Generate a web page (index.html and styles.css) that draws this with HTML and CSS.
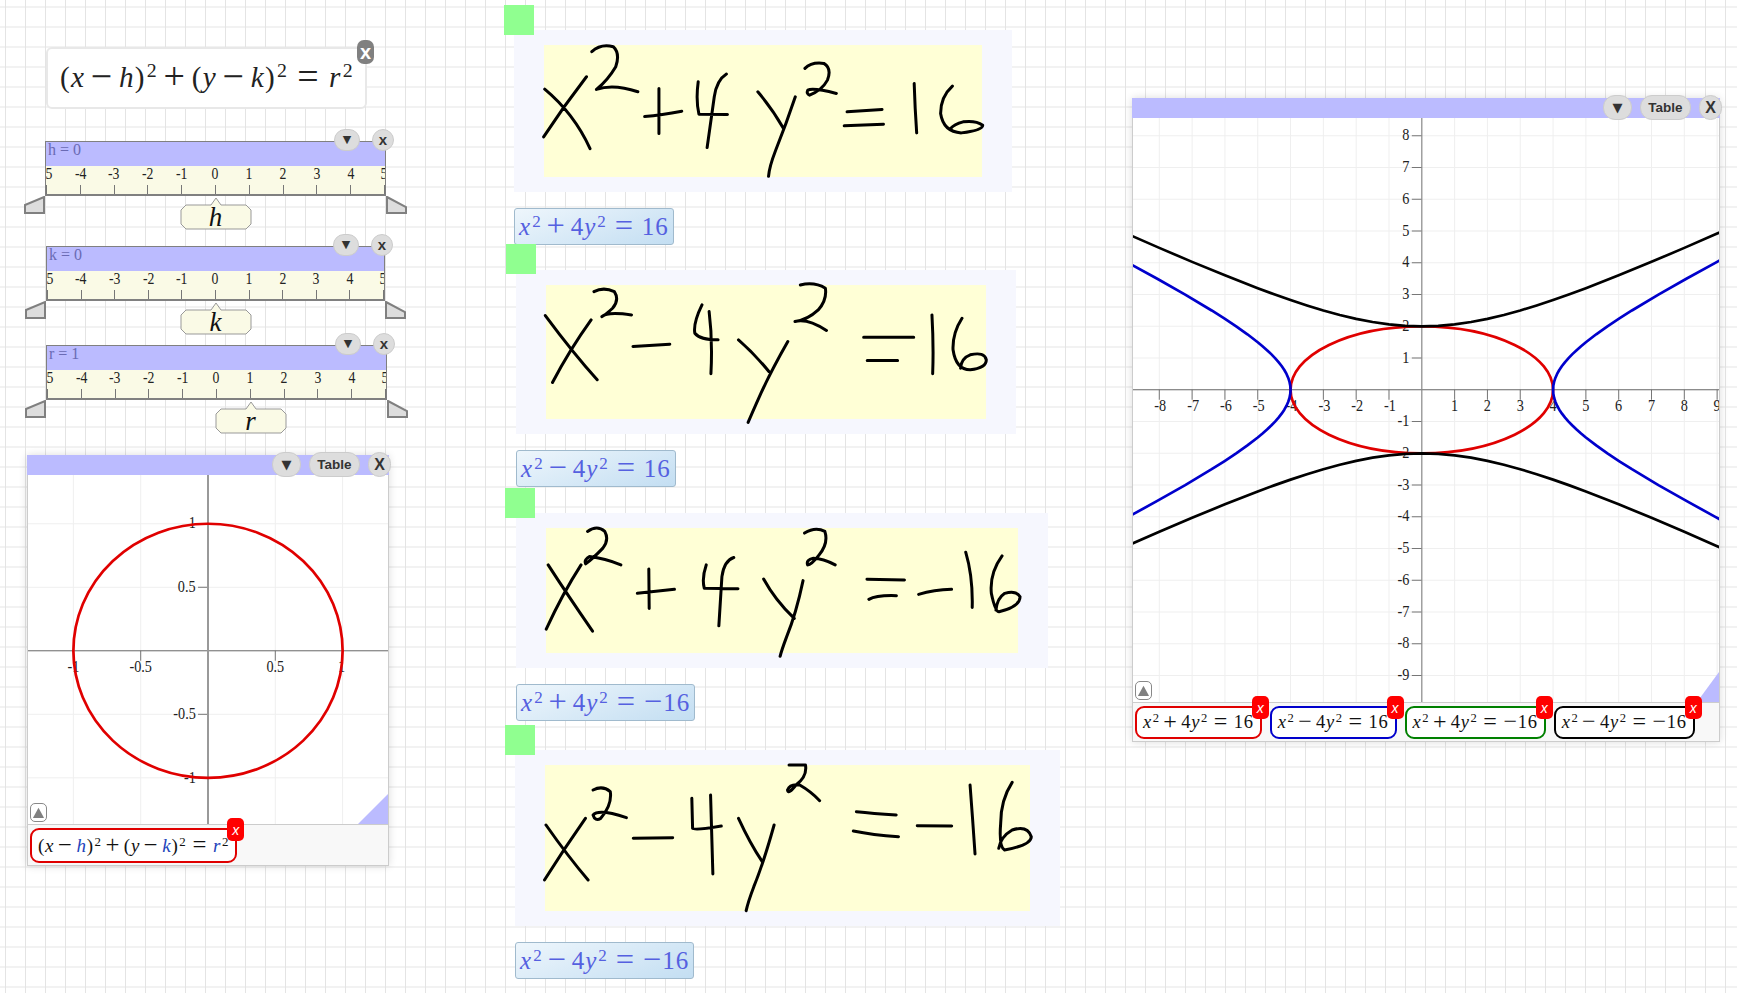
FILE: index.html
```html
<!DOCTYPE html>
<html lang="en">
<head>
<meta charset="utf-8">
<title>Conics workspace</title>
<link rel="stylesheet" href="styles.css">
</head>
<body>
<main class="canvas">

  <div class="formula-card">
    <span class="math"><span>(</span><i>x</i><span class="op">−</span><i>h</i><span>)</span><sup>2</sup><span class="op">+</span><span>(</span><i>y</i><span class="op">−</span><i>k</i><span>)</span><sup>2</sup><span class="rel">=</span><i>r</i><sup>2</sup></span>
    <button class="card-close">x</button>
  </div>

  <section class="slider slider-h">
    <div class="slider-head">h = 0</div>
    <div class="scale">
      <div class="tick"><span>-5</span></div><div class="tick"><span>-4</span></div><div class="tick"><span>-3</span></div><div class="tick"><span>-2</span></div><div class="tick"><span>-1</span></div><div class="tick"><span>0</span></div><div class="tick"><span>1</span></div><div class="tick"><span>2</span></div><div class="tick"><span>3</span></div><div class="tick"><span>4</span></div><div class="tick"><span>5</span></div>
    </div>
    <svg class="handle handle-l" viewBox="0 0 22 18"><polygon points="20,1 20,17 1,17 1,9"/></svg>
    <svg class="handle handle-r" viewBox="0 0 22 18"><polygon points="2,1 21,11 21,17 2,17"/></svg>
    <div class="thumb" style="left:50%"><svg viewBox="0 0 72 33"><polygon points="36,1 41,8 66,8 71,13 71,27 66,32 6,32 1,27 1,13 6,8 31,8"/></svg><i>h</i></div>
    <div class="tools slider-tools"><button class="pill pill-drop">▼</button><button class="pill pill-x">x</button></div>
  </section>

  <section class="slider slider-k">
    <div class="slider-head">k = 0</div>
    <div class="scale">
      <div class="tick"><span>-5</span></div><div class="tick"><span>-4</span></div><div class="tick"><span>-3</span></div><div class="tick"><span>-2</span></div><div class="tick"><span>-1</span></div><div class="tick"><span>0</span></div><div class="tick"><span>1</span></div><div class="tick"><span>2</span></div><div class="tick"><span>3</span></div><div class="tick"><span>4</span></div><div class="tick"><span>5</span></div>
    </div>
    <svg class="handle handle-l" viewBox="0 0 22 18"><polygon points="20,1 20,17 1,17 1,9"/></svg>
    <svg class="handle handle-r" viewBox="0 0 22 18"><polygon points="2,1 21,11 21,17 2,17"/></svg>
    <div class="thumb" style="left:50%"><svg viewBox="0 0 72 33"><polygon points="36,1 41,8 66,8 71,13 71,27 66,32 6,32 1,27 1,13 6,8 31,8"/></svg><i>k</i></div>
    <div class="tools slider-tools"><button class="pill pill-drop">▼</button><button class="pill pill-x">x</button></div>
  </section>

  <section class="slider slider-r">
    <div class="slider-head">r = 1</div>
    <div class="scale">
      <div class="tick"><span>-5</span></div><div class="tick"><span>-4</span></div><div class="tick"><span>-3</span></div><div class="tick"><span>-2</span></div><div class="tick"><span>-1</span></div><div class="tick"><span>0</span></div><div class="tick"><span>1</span></div><div class="tick"><span>2</span></div><div class="tick"><span>3</span></div><div class="tick"><span>4</span></div><div class="tick"><span>5</span></div>
    </div>
    <svg class="handle handle-l" viewBox="0 0 22 18"><polygon points="20,1 20,17 1,17 1,9"/></svg>
    <svg class="handle handle-r" viewBox="0 0 22 18"><polygon points="2,1 21,11 21,17 2,17"/></svg>
    <div class="thumb" style="left:60%"><svg viewBox="0 0 72 33"><polygon points="36,1 41,8 66,8 71,13 71,27 66,32 6,32 1,27 1,13 6,8 31,8"/></svg><i>r</i></div>
    <div class="tools slider-tools"><button class="pill pill-drop">▼</button><button class="pill pill-x">x</button></div>
  </section>

  <section class="win win-small">
    <div class="win-head"></div>
    <div class="plot">
      <svg class="plot-svg" viewBox="0 0 360 350">
        <g transform="translate(180 176.3) scale(135 -127.4)">
          <path class="grid" d="M-1 -2V2M-.5 -2V2M.5 -2V2M1 -2V2M-2 1H2M-2 .5H2M-2 -.5H2M-2 -1H2"/>
          <path class="tickmark" d="M-1 0V-.078M-.5 0V-.078M.5 0V-.078M1 0V-.078M-.074 1H0M-.074 .5H0M-.074 -.5H0M-.074 -1H0"/>
          <path class="axis-x" d="M-2 0H2"/>
          <path class="axis-y" d="M0 -2V2"/>
        </g>
        <g>
          <text class="lbl" x="45" y="198">-1</text><text class="lbl" x="112.5" y="198">-0.5</text><text class="lbl" x="247.5" y="198">0.5</text><text class="lbl" x="314" y="198">1</text>
          <text class="lbl" x="164.3" y="53">1</text><text class="lbl" x="158.7" y="117.5">0.5</text><text class="lbl" x="156.5" y="244.5">-0.5</text><text class="lbl" x="162" y="309">-1</text>
        </g>
        <g transform="translate(180 176.3) scale(135 -127.4)">
          <circle class="curve c-red" r="1"/>
        </g>
      </svg>
      <button class="up-btn"><svg viewBox="0 0 14 14"><polygon points="7,2 13,13 1,13"/></svg></button>
      <div class="corner"></div>
    </div>
    <div class="legend">
      <div class="chip chip-red"><span class="math"><span>(</span><i>x</i><span class="op">−</span><i class="var">h</i><span>)</span><sup>2</sup><span class="op">+</span><span>(</span><i>y</i><span class="op">−</span><i class="var">k</i><span>)</span><sup>2</sup><span class="rel">=</span><i class="var">r</i><sup>2</sup></span><button class="chip-x">x</button></div>
    </div>
    <div class="tools win-tools"><button class="pill pill-drop">▼</button><button class="pill pill-table">Table</button><button class="pill pill-x">X</button></div>
  </section>

  <article class="note note-1">
    <div class="handle-square"></div>
    <div class="sheet">
      <div class="ink-fill"></div>
      <svg class="ink" viewBox="67 90 1395 485" preserveAspectRatio="none"><path d="M153 267Q235 340 280 445M270 230Q205 320 150 410M285 155Q310 130 345 140Q365 160 352 200Q330 240 298 268Q345 250 414 275M433 349Q480 345 537 333M473 265V400M583 245Q576 300 585 342L665 343M662 222Q635 240 628 290L608 442M750 275Q790 325 822 385M855 290Q830 370 800 450Q782 500 780 528M882 205Q900 185 935 190Q958 205 945 240Q930 270 895 285Q885 280 890 270Q905 262 970 280M1000 335L1098 328M992 377L1102 372M1188 250Q1190 320 1195 398M1295 258Q1262 290 1262 340Q1270 395 1320 398Q1380 390 1380 375Q1360 360 1325 365Q1300 372 1290 385"/></svg>
    </div>
    <div class="eq-tag"><span class="math"><i>x</i><sup>2</sup><span class="op">+</span>4<i>y</i><sup>2</sup><span class="rel">=</span>16</span></div>
  </article>

  <article class="note note-2">
    <div class="handle-square"></div>
    <div class="sheet">
      <div class="ink-fill"></div>
      <svg class="ink" viewBox="75 810 1398 493" preserveAspectRatio="none"><path d="M157 947Q235 1060 302 1140M285 960Q225 1050 177 1148M293 875Q320 860 350 875Q365 900 345 925Q325 945 315 950Q330 935 398 945M402 1040L505 1033M595 915Q570 970 575 1000Q590 1020 640 1020M615 935Q625 1020 620 1122M697 1020Q740 1060 782 1115M835 1025Q790 1110 760 1180Q735 1240 724 1268M870 855Q910 845 940 865Q945 900 920 930Q890 960 855 965Q890 955 943 992M1047 1012L1187 1012M1057 1082L1142 1082M1238 945Q1243 1040 1240 1122M1322 955Q1295 1000 1297 1050Q1305 1110 1345 1110Q1390 1105 1390 1080Q1385 1055 1345 1065Q1320 1075 1318 1105"/></svg>
    </div>
    <div class="eq-tag"><span class="math"><i>x</i><sup>2</sup><span class="op">−</span>4<i>y</i><sup>2</sup><span class="rel">=</span>16</span></div>
  </article>

  <article class="note note-3">
    <div class="handle-square"></div>
    <div class="sheet">
      <div class="ink-fill"></div>
      <svg class="ink" viewBox="68 70 1390 463" preserveAspectRatio="none"><path d="M152 225Q200 310 268 423M238 225Q190 310 147 417M255 125Q280 105 300 125Q312 150 295 175Q270 205 250 222Q245 210 260 200Q300 205 342 225M385 310L482 298M415 237L416 355M565 225Q553 265 560 295L648 296M637 203Q612 212 606 260L598 407M715 267Q745 330 795 385M818 272Q800 370 775 440Q762 480 758 498M822 130Q850 110 875 125Q885 160 860 195Q840 225 830 225Q825 210 845 205Q870 205 902 225M985 268L1083 270M990 328Q1010 315 1062 317M1120 313Q1160 300 1206 298M1243 187Q1262 260 1260 352M1338 198Q1305 250 1310 310Q1320 365 1330 365Q1385 350 1385 320Q1375 300 1345 310Q1325 325 1322 360"/></svg>
    </div>
    <div class="eq-tag"><span class="math"><i>x</i><sup>2</sup><span class="op">+</span>4<i>y</i><sup>2</sup><span class="rel">=</span><span class="neg">−</span>16</span></div>
  </article>

  <article class="note note-4">
    <div class="handle-square"></div>
    <div class="sheet">
      <div class="ink-fill"></div>
      <svg class="ink" viewBox="66 780 1424 528" preserveAspectRatio="none"><path d="M147 1005Q205 1100 257 1170M250 985Q195 1075 143 1170M270 900Q295 885 315 905Q320 945 290 985Q275 995 270 975Q285 955 357 983M375 1045L478 1043M528 925L530 1015Q535 1022 605 1008M577 915L583 1152M650 985Q680 1060 712 1115M743 1005Q715 1120 690 1190Q675 1235 670 1262M782 825L825 825Q830 860 800 885Q780 915 778 900Q785 880 810 885Q840 905 862 932M958 965Q1000 970 1062 975M950 1023Q1000 1035 1068 1040M1117 1007L1207 1008M1255 885Q1262 990 1268 1092M1365 877Q1335 930 1335 1000Q1330 1070 1345 1080Q1415 1065 1415 1040Q1405 1005 1365 1020Q1335 1040 1330 1075"/></svg>
    </div>
    <div class="eq-tag"><span class="math"><i>x</i><sup>2</sup><span class="op">−</span>4<i>y</i><sup>2</sup><span class="rel">=</span><span class="neg">−</span>16</span></div>
  </article>

  <section class="win win-big">
    <div class="win-head"></div>
    <div class="plot">
      <svg class="plot-svg" viewBox="0 0 586 585">
        <g transform="translate(288.8 272.3) scale(32.87 -31.8)">
          <path class="grid" d="M-8 -10V10M-7 -10V10M-6 -10V10M-5 -10V10M-4 -10V10M-3 -10V10M-2 -10V10M-1 -10V10M1 -10V10M2 -10V10M3 -10V10M4 -10V10M5 -10V10M6 -10V10M7 -10V10M8 -10V10M9 -10V10M-9 8H10M-9 7H10M-9 6H10M-9 5H10M-9 4H10M-9 3H10M-9 2H10M-9 1H10M-9 -1H10M-9 -2H10M-9 -3H10M-9 -4H10M-9 -5H10M-9 -6H10M-9 -7H10M-9 -8H10M-9 -9H10"/>
          <path class="tickmark" d="M-8 0V-.314M-7 0V-.314M-6 0V-.314M-5 0V-.314M-4 0V-.314M-3 0V-.314M-2 0V-.314M-1 0V-.314M1 0V-.314M2 0V-.314M3 0V-.314M4 0V-.314M5 0V-.314M6 0V-.314M7 0V-.314M8 0V-.314M9 0V-.314M-.304 8H0M-.304 7H0M-.304 6H0M-.304 5H0M-.304 4H0M-.304 3H0M-.304 2H0M-.304 1H0M-.304 -1H0M-.304 -2H0M-.304 -3H0M-.304 -4H0M-.304 -5H0M-.304 -6H0M-.304 -7H0M-.304 -8H0M-.304 -9H0"/>
          <path class="axis-x" d="M-9 0H10"/>
          <path class="axis-y thin" d="M0 -10V10"/>
        </g>
        <g>
          <text class="lbl" x="26.8" y="293.5">-8</text><text class="lbl" x="59.7" y="293.5">-7</text><text class="lbl" x="92.6" y="293.5">-6</text><text class="lbl" x="125.5" y="293.5">-5</text><text class="lbl" x="158.3" y="293.5">-4</text><text class="lbl" x="191.2" y="293.5">-3</text><text class="lbl" x="224.1" y="293.5">-2</text><text class="lbl" x="256.9" y="293.5">-1</text><text class="lbl" x="321.7" y="293.5">1</text><text class="lbl" x="354.5" y="293.5">2</text><text class="lbl" x="387.4" y="293.5">3</text><text class="lbl" x="420.3" y="293.5">4</text><text class="lbl" x="453.2" y="293.5">5</text><text class="lbl" x="486" y="293.5">6</text><text class="lbl" x="518.9" y="293.5">7</text><text class="lbl" x="551.8" y="293.5">8</text><text class="lbl" x="584.6" y="293.5">9</text>
          <text class="lbl" x="272.8" y="22.4">8</text><text class="lbl" x="272.8" y="54.2">7</text><text class="lbl" x="272.8" y="86">6</text><text class="lbl" x="272.8" y="117.8">5</text><text class="lbl" x="272.8" y="149.6">4</text><text class="lbl" x="272.8" y="181.4">3</text><text class="lbl" x="272.8" y="213.2">2</text><text class="lbl" x="272.8" y="245">1</text><text class="lbl" x="270.3" y="308.6">-1</text><text class="lbl" x="270.3" y="340.4">-2</text><text class="lbl" x="270.3" y="372.2">-3</text><text class="lbl" x="270.3" y="404">-4</text><text class="lbl" x="270.3" y="435.8">-5</text><text class="lbl" x="270.3" y="467.6">-6</text><text class="lbl" x="270.3" y="499.4">-7</text><text class="lbl" x="270.3" y="531.2">-8</text><text class="lbl" x="270.3" y="563">-9</text>
        </g>
        <g transform="translate(288.8 272.3) scale(32.87 -31.8)">
          <ellipse class="curve c-red" rx="4" ry="2"/>
          <path id="blue-branch" class="curve c-blue" d="M9.12 4.1L8.944 4L8.062 3.5L7.211 3L6.403 2.5L6.021 2.25L5.657 2L5.315 1.75L5 1.5L4.854 1.375L4.717 1.25L4.589 1.125L4.472 1L4.366 .875L4.272 .75L4.19 .625L4.123 .5L4.07 .375L4.031 .25L4.008 .125L4 0L4.008 -.125L4.031 -.25L4.07 -.375L4.123 -.5L4.19 -.625L4.272 -.75L4.366 -.875L4.472 -1L4.589 -1.125L4.717 -1.25L4.854 -1.375L5 -1.5L5.315 -1.75L5.657 -2L6.021 -2.25L6.403 -2.5L7.211 -3L8.062 -3.5L8.944 -4L9.12 -4.1"/>
          <use href="#blue-branch" transform="scale(-1 1)"/>
          <path id="black-branch" class="curve c-black" d="M-9.2 5.01L-9 4.924L-8 4.472L-7 4.031L-6 3.606L-5 3.2L-4.5 3.01L-4 2.828L-3.5 2.658L-3 2.5L-2.5 2.358L-2 2.236L-1.5 2.136L-1 2.062L-.5 2.016L0 2L.5 2.016L1 2.062L1.5 2.136L2 2.236L2.5 2.358L3 2.5L3.5 2.658L4 2.828L4.5 3.01L5 3.2L6 3.606L7 4.031L8 4.472L9 4.924L9.2 5.01"/>
          <use href="#black-branch" transform="scale(1 -1)"/>
        </g>
      </svg>
      <button class="up-btn"><svg viewBox="0 0 14 14"><polygon points="7,2 13,13 1,13"/></svg></button>
      <div class="corner"></div>
    </div>
    <div class="legend">
      <div class="chip chip-red"><span class="math"><i>x</i><sup>2</sup><span class="op">+</span>4<i>y</i><sup>2</sup><span class="rel">=</span>16</span><button class="chip-x">x</button></div>
      <div class="chip chip-blue"><span class="math"><i>x</i><sup>2</sup><span class="op">−</span>4<i>y</i><sup>2</sup><span class="rel">=</span>16</span><button class="chip-x">x</button></div>
      <div class="chip chip-green"><span class="math"><i>x</i><sup>2</sup><span class="op">+</span>4<i>y</i><sup>2</sup><span class="rel">=</span><span class="neg">−</span>16</span><button class="chip-x">x</button></div>
      <div class="chip chip-black"><span class="math"><i>x</i><sup>2</sup><span class="op">−</span>4<i>y</i><sup>2</sup><span class="rel">=</span><span class="neg">−</span>16</span><button class="chip-x">x</button></div>
    </div>
    <div class="tools win-tools"><button class="pill pill-drop">▼</button><button class="pill pill-table">Table</button><button class="pill pill-x">X</button></div>
  </section>

</main>
</body>
</html>
```

FILE: styles.css
```css
* { box-sizing: border-box; }
html, body { margin: 0; height: 100%; }
body {
  overflow: hidden;
  background-color: #fff;
  background-image: linear-gradient(#e4e4e4 1px, transparent 1px), linear-gradient(90deg, #e4e4e4 1px, transparent 1px);
  background-size: 20px 20px;
  background-position: 5px 6.5px;
  font-family: "Liberation Serif", serif;
}
.canvas { position: relative; width: 1737px; height: 993px; }
button { font-family: inherit; padding: 0; margin: 0; }

/* math typesetting */
.math { font-family: "Liberation Serif", serif; letter-spacing: .04em; white-space: nowrap; line-height: 1; }
.math sup { font-size: .68em; vertical-align: .5em; line-height: 0; margin-left: .06em; }
.math .op, .math .rel, .math .neg { font-size: 1.3em; line-height: 0; vertical-align: -.04em; }
.math .op { margin: 0 .15em; }
.math .rel { margin: 0 .24em; }

/* formula card */
.formula-card {
  position: absolute; left: 46px; top: 47px; width: 321px; height: 62px;
  background: #fff; border: 2px solid #e8e8e8; border-radius: 6px;
  display: flex; align-items: center; padding-left: 12px; color: #222;
}
.formula-card .math { font-size: 29.2px; }
.card-close {
  position: absolute; right: -9px; top: -9px; width: 17px; height: 24px;
  background: #808080; border: 0; border-radius: 7px; color: #fff;
  font: bold 20px/21px "Liberation Sans", sans-serif;
}

/* sliders */
.slider { position: absolute; width: 341px; height: 55px; display: flex; flex-direction: column; }
.slider-h { left: 45px; top: 141px; }
.slider-k { left: 46px; top: 246px; width: 339px; }
.slider-r { left: 46px; top: 345px; }
.slider-head {
  height: 25px; background: #bbf; border: 1px solid #808080; border-bottom: 0;
  color: #6a6ab4; font-size: 16px; line-height: 15px; padding-left: 2px;
}
.scale {
  flex: 1; display: flex; justify-content: space-between; overflow: hidden;
  background: #fafae6; border: 1px solid #808080; border-width: 0 1px 2px;
}
.tick { width: 1px; position: relative; display: flex; justify-content: center; }
.tick::after { content: ""; position: absolute; left: 0; bottom: 0; width: 1px; height: 9px; background: #777; }
.tick span { flex: none; font-size: 16px; line-height: 16px; color: #222; transform: scaleX(.86); }
.handle { position: absolute; width: 22px; height: 18px; top: 55px; }
.handle-l { left: -21px; }
.handle-r { right: -21px; }
.handle polygon { fill: #ddd; stroke: #808080; stroke-width: 2; }
.thumb {
  position: absolute; top: 56px; width: 72px; height: 33px; transform: translateX(-50%);
  display: flex; justify-content: center; padding-top: 8px;
}
.thumb svg { position: absolute; left: 0; top: 0; width: 72px; height: 33px; }
.thumb polygon { fill: #fafae6; stroke: #999; stroke-width: 1; }
.thumb i { position: relative; font-size: 27px; line-height: 25px; color: #111; }

/* tool pills */
.tools { position: absolute; display: flex; }
.slider-tools { right: -8px; top: -12px; gap: 12px; }
.win-tools { top: -3px; right: -3px; gap: 8px; }
.pill {
  height: 22px; background: #ddd; border: 1px solid #ccc; border-radius: 12px; color: #333;
  font: bold 13px/20px "Liberation Sans", sans-serif;
}
.win-tools .pill { height: 25px; line-height: 23px; }
.pill-drop { width: 26px; font-family: "DejaVu Sans", sans-serif; font-size: 11px; }
.pill-x { width: 22px; font-size: 15px; }
.pill-table { width: 51px; font-size: 13.5px; }
.win-tools .pill-drop { width: 29px; font-size: 13px; }
.win-tools .pill-x { width: 23px; font-size: 16px; }

/* graph windows */
.win {
  position: absolute; display: flex; flex-direction: column;
  background: #fff; border: 1px solid #ccc; border-top: 0;
  box-shadow: 0 0 8px rgba(0, 0, 0, .14);
}
.win-small { left: 27px; top: 455px; width: 362px; height: 411px; }
.win-big { left: 1132px; top: 98px; width: 588px; height: 644px; }
.win-head { height: 20px; flex: none; background: #bbf; margin: 0 -1px; }
.plot { flex: 1; position: relative; overflow: hidden; border-bottom: 1px solid #ccc; }
.plot-svg { display: block; width: 100%; height: 100%; }
.grid, .tickmark, .axis-x, .axis-y, .curve { fill: none; vector-effect: non-scaling-stroke; }
.grid { stroke: #efefef; stroke-width: 1; }
.tickmark { stroke: #777; stroke-width: 1; }
.axis-x { stroke: #666; stroke-width: 1; }
.axis-y { stroke: #999; stroke-width: 2; }
.axis-y.thin { stroke: #888; stroke-width: 1.2; }
.curve { stroke-width: 2.7; stroke-linejoin: round; }
.c-red { stroke: #e00000; }
.c-blue { stroke: #0000cc; }
.c-black { stroke: #000; }
.lbl {
  font: 17px "Liberation Serif", serif; fill: #222; text-anchor: middle;
  transform-box: fill-box; transform-origin: center; transform: scaleX(.84);
}
.up-btn {
  position: absolute; left: 2px; bottom: 2px; width: 17px; height: 19px;
  background: #fff; border: 1px solid #888; border-radius: 5px;
  display: flex; align-items: center; justify-content: center;
}
.up-btn svg { width: 13px; height: 13px; }
.up-btn polygon { fill: #808080; }
.corner {
  position: absolute; right: 0; bottom: 0; width: 30px; height: 30px;
  background: #bbf; clip-path: polygon(100% 0, 100% 100%, 0 100%);
}
.win-big .corner { width: 22px; }
.legend {
  flex: none; height: 40px; background: #f8f8f8; display: flex; gap: 8px;
  padding: 3px 3px 2px;
}
.win-small .legend { padding-left: 2px; }
.win-big .legend { height: 38px; padding-left: 2px; }
.chip {
  position: relative; height: 100%; padding: 0 6px; background: #fff;
  border: 2px solid #000; border-radius: 9px; display: flex; align-items: center; color: #111;
}
.chip .math { font-size: 18.5px; }
.win-small .chip .math { font-size: 19px; }
.chip .var { color: #2244bb; }
.chip-red { border-color: #e00000; }
.chip-blue { border-color: #0000cc; }
.chip-green { border-color: #008000; }
.chip-black { border-color: #000; }
.chip-x {
  position: absolute; right: -9px; top: -12px; width: 17px; height: 23px;
  background: #f00; border: 0; border-radius: 5px; color: #fff;
  font: italic 14px/22px "Liberation Sans", sans-serif;
}

/* handwriting notes */
.note { position: absolute; display: flex; flex-direction: column; align-items: flex-start; }
.note-1 { left: 504px; top: 5px; }
.note-2 { left: 506px; top: 244px; }
.note-3 { left: 505px; top: 488px; }
.note-4 { left: 505px; top: 725px; }
.handle-square { width: 30px; height: 30px; background: #90ff90; position: relative; z-index: 1; }
.sheet {
  position: relative; margin: -5px 0 0 10px; padding: 15px 30px;
  background: #f6f7fe; display: flex;
}
.note-1 .sheet { width: 498px; height: 162px; }
.note-2 .sheet { width: 500px; height: 164px; margin-top: -4px; }
.note-3 .sheet { width: 532px; height: 155px; margin-left: 11px; }
.note-4 .sheet { width: 545px; height: 176px; }
.ink-fill { flex: 1; background: #ffffd6; }
.ink { position: absolute; left: 0; top: 0; width: 100%; height: 100%; overflow: visible; }
.ink path { fill: none; stroke: #000; stroke-width: 3; stroke-linecap: round; stroke-linejoin: round; vector-effect: non-scaling-stroke; }
.eq-tag {
  margin: 16px 0 0 10px; height: 37px; padding: 0 4px; display: flex; align-items: center;
  background: linear-gradient(160deg, #eef6fc, #c3def2); border: 1px solid #a0bacd; border-radius: 3px;
  color: #5560e0;
}
.note-3 .eq-tag { margin-left: 11px; }
.eq-tag .math { font-size: 25px; }
```
